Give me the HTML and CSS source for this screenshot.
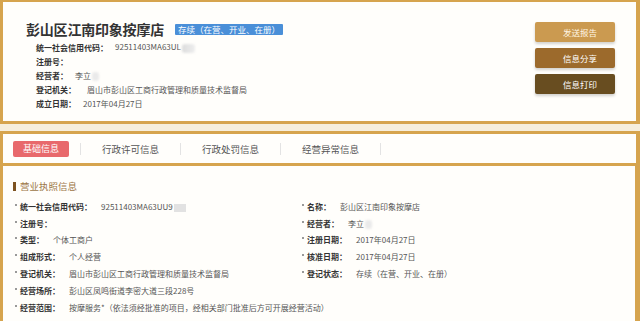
FILE: index.html
```html
<!DOCTYPE html>
<html lang="zh-CN">
<head>
    <meta charset="UTF-8">
    <meta name="viewport" content="width=device-width, initial-scale=1.0">
    <title>彭山区江南印象按摩店</title>
    <link rel="stylesheet" href="styles.css">
</head>
<body>
    <div class="summary">
        <div class="summary-info">
            <div class="title-row">
                <h1>彭山区江南印象按摩店</h1>
                <span class="badge">存续（在营、开业、在册）</span>
            </div>
            <div class="line"><b>统一社会信用代码：</b><span>92511403MA63UL<i class="blur"></i></span></div>
            <div class="line"><b>注册号：</b><span></span></div>
            <div class="line"><b>经营者：</b><span>李立<i class="blur small"></i></span></div>
            <div class="line"><b>登记机关：</b><span class="wide">眉山市彭山区工商行政管理和质量技术监督局</span></div>
            <div class="line"><b>成立日期：</b><span>2017年04月27日</span></div>
        </div>
        <div class="actions">
            <button class="btn btn-send">发送报告</button>
            <button class="btn btn-share">信息分享</button>
            <button class="btn btn-print">信息打印</button>
        </div>
    </div>

    <div class="tabs">
        <span class="tab-active">基础信息</span>
        <span class="sep"></span>
        <span class="tab">行政许可信息</span>
        <span class="sep"></span>
        <span class="tab">行政处罚信息</span>
        <span class="sep"></span>
        <span class="tab">经营异常信息</span>
        <span class="sep"></span>
    </div>

    <div class="detail">
        <h2>营业执照信息</h2>
        <div class="grid">
            <div class="item"><b>统一社会信用代码：</b><span>92511403MA63UU9<i class="mask"></i></span></div>
            <div class="item"><b>名称：</b><span>彭山区江南印象按摩店</span></div>
            <div class="item"><b>注册号：</b><span></span></div>
            <div class="item"><b>经营者：</b><span>李立<i class="blur small"></i></span></div>
            <div class="item"><b>类型：</b><span>个体工商户</span></div>
            <div class="item"><b>注册日期：</b><span>2017年04月27日</span></div>
            <div class="item"><b>组成形式：</b><span>个人经营</span></div>
            <div class="item"><b>核准日期：</b><span>2017年04月27日</span></div>
            <div class="item"><b>登记机关：</b><span>眉山市彭山区工商行政管理和质量技术监督局</span></div>
            <div class="item"><b>登记状态：</b><span>存续（在营、开业、在册）</span></div>
            <div class="item full"><b>经营场所：</b><span>彭山区凤鸣街道李密大道三段228号</span></div>
            <div class="item full"><b>经营范围：</b><span>按摩服务*（依法须经批准的项目，经相关部门批准后方可开展经营活动）</span></div>
        </div>
    </div>
</body>
</html>
```

FILE: styles.css
```css
body {
    margin: 0;
    background-color: #f6eedc;
    font-family: "Noto Sans CJK SC", "Liberation Sans", sans-serif;
    color: #555;
}
.summary {
    box-sizing: border-box;
    height: 124px;
    display: flex;
    justify-content: space-between;
    background-color: #fffefb;
    border: 3px solid #d6a44e;
    border-top-width: 2px;
    border-right-width: 4px;
}
.summary-info {
    padding: 16px 0 0 23px;
}
.title-row {
    display: flex;
    align-items: center;
    height: 22px;
}
h1 {
    margin: 0;
    font-size: 14px;
    font-weight: bold;
    color: #333;
    letter-spacing: -0.2px;
}
.badge {
    margin-left: 11px;
    padding: 0 3px;
    height: 11px;
    line-height: 11px;
    font-size: 8.5px;
    color: #fff;
    background-color: #4a8fd8;
    border-radius: 1px;
}
.line {
    display: flex;
    align-items: center;
    height: 14.2px;
    padding-left: 10px;
    font-size: 8px;
}
.line b {
    color: #333;
    margin-right: 7px;
}
.line .wide {
    margin-left: 4px;
}
.blur {
    display: inline-block;
    width: 13px;
    height: 9px;
    margin-left: 1px;
    vertical-align: middle;
    background: linear-gradient(90deg, #dcdcdc, #eeeeee);
    border-radius: 3px;
    filter: blur(1px);
}
.blur.small {
    width: 7px;
    background: #eaeaea;
}
.actions {
    display: flex;
    flex-direction: column;
    gap: 6px;
    padding: 20px 21px 0 0;
}
.btn {
    width: 80px;
    height: 20px;
    padding: 0 0 0 10px;
    border: none;
    border-radius: 2px;
    font-family: inherit;
    font-size: 8.5px;
    color: #fff;
    box-shadow: 0 2px 3px rgba(0, 0, 0, 0.18);
}
.btn-send {
    background-color: #cb9a50;
    color: #fff5e2;
}
.btn-share {
    background-color: #9c6a2c;
}
.btn-print {
    background-color: #684d20;
}
.tabs {
    box-sizing: border-box;
    height: 35px;
    margin-top: 7px;
    display: flex;
    align-items: center;
    background-color: #fffefb;
    border: 3px solid #d6a44e;
    border-right-width: 4px;
}
.tab-active {
    width: 56px;
    height: 16px;
    line-height: 16px;
    margin: 0 11px 0 10px;
    text-align: center;
    font-size: 9px;
    color: #fff;
    background-color: #e8696c;
    border-radius: 2px;
}
.sep {
    width: 1px;
    height: 12px;
    background-color: #e3e3e3;
}
.tab {
    width: 99px;
    text-align: center;
    font-size: 9.5px;
    color: #555;
}
.detail {
    box-sizing: border-box;
    height: 155px;
    padding: 13px 0 0 10px;
    background-color: #fffefb;
    border-left: 3px solid #d6a44e;
    border-right: 5px solid #d6a44e;
}
h2 {
    display: flex;
    align-items: center;
    margin: 0 0 5px;
    font-size: 9.5px;
    font-weight: normal;
    color: #9c7646;
}
h2::before {
    content: "";
    width: 3px;
    height: 9px;
    margin-right: 4px;
    background-color: #7d5220;
}
.grid {
    display: grid;
    grid-template-columns: 287px 1fr;
}
.item {
    display: flex;
    align-items: center;
    height: 16.8px;
    padding-left: 2px;
    font-size: 8px;
}
.item::before {
    content: "";
    width: 2px;
    height: 2px;
    margin: 0 3px 3px 0;
    background-color: #999;
}
.item.full {
    grid-column: 1 / 3;
}
.item b {
    color: #333;
    margin-right: 9px;
}
.mask {
    display: inline-block;
    width: 12px;
    height: 8px;
    margin-left: 1px;
    vertical-align: middle;
    background-color: #e2e2e2;
}
```
